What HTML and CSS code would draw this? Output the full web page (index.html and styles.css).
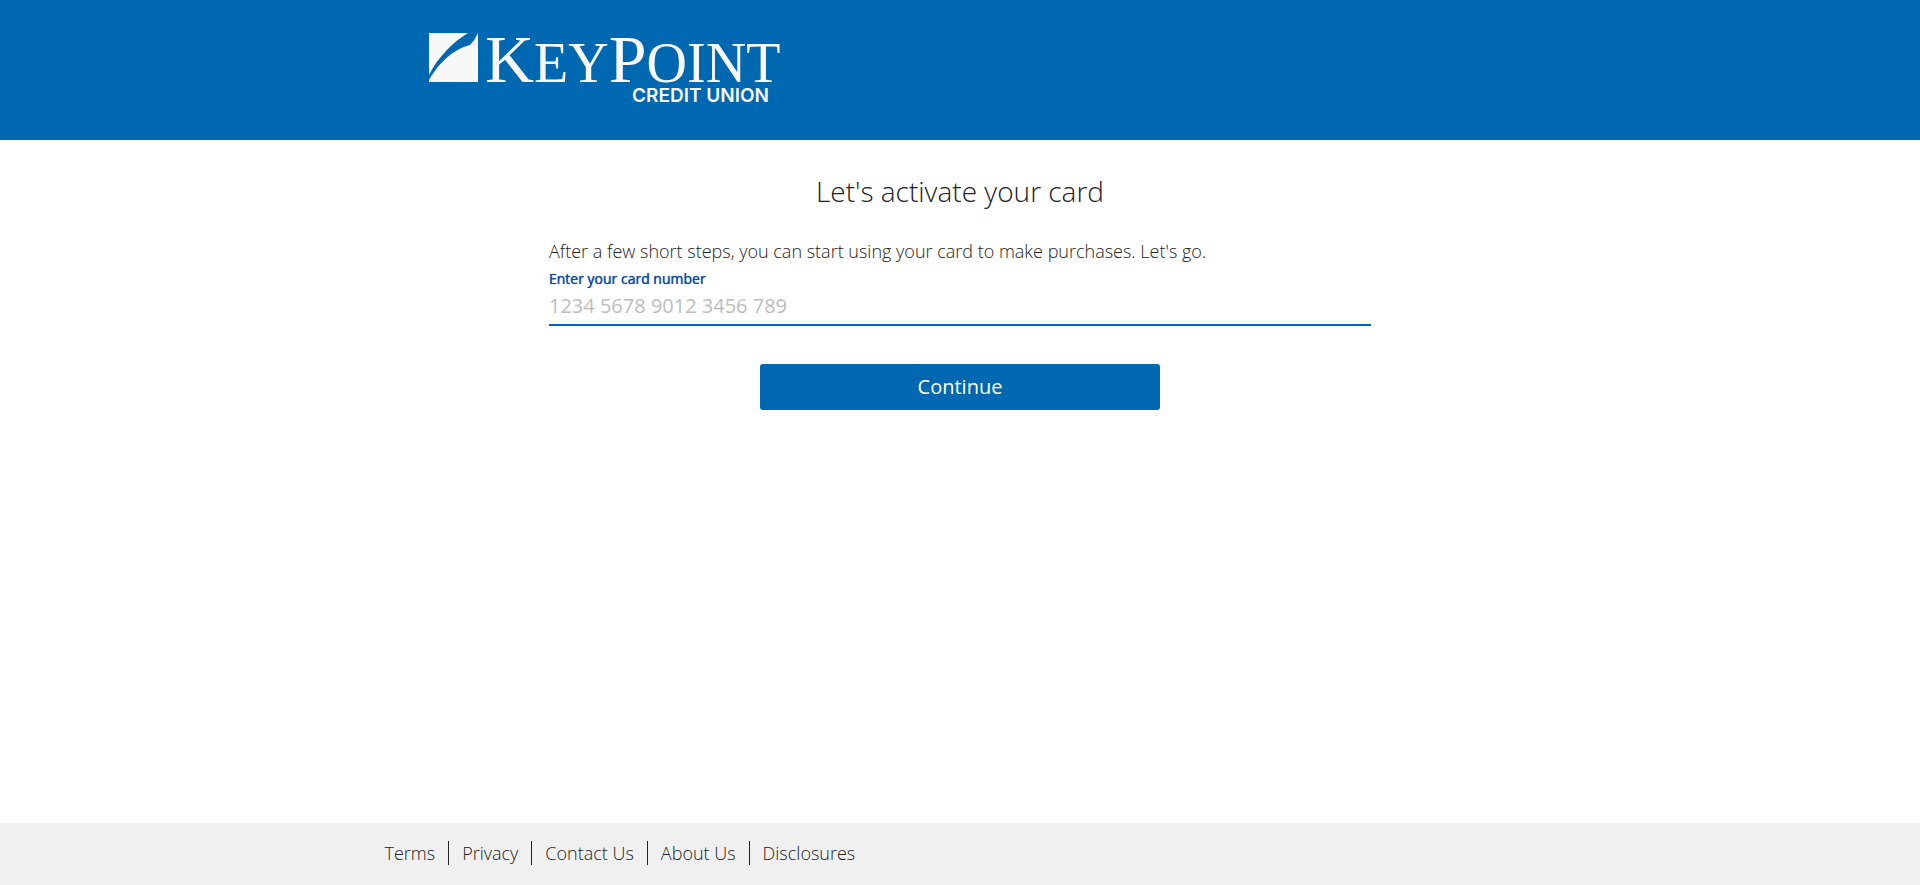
FILE: index.html
```html
<!DOCTYPE html>
<html lang="en">
<head>
<meta charset="utf-8">
<meta name="viewport" content="width=device-width, initial-scale=1">
<title>Activate your card</title>
<link rel="stylesheet" href="styles.css">
</head>
<body>
<header class="site-header">
  <div class="header-inner">
    <svg class="logo" width="352" height="76" viewBox="0 0 352 76" role="img" aria-label="KeyPoint Credit Union">
      <path d="M0 0H39C24 9 9 24 0 42ZM49 0V49H0V47C9 31 24 16 41 12Q46 7 49 0Z"/>
      <text class="logo-name" x="56" y="49"><tspan class="logo-cap">K</tspan>EY<tspan class="logo-cap">P</tspan>OINT</text>
      <text class="logo-sub" x="340" y="69" text-anchor="end">CREDIT UNION</text>
    </svg>
  </div>
</header>
<main class="content">
  <h1 class="title">Let's activate your card</h1>
  <form class="card-form">
    <p class="intro">After a few short steps, you can start using your card to make purchases. Let's go.</p>
    <label class="field-label" for="card-number">Enter your card number</label>
    <input class="field-input" id="card-number" type="text" inputmode="numeric" placeholder="1234 5678 9012 3456 789">
    <button class="continue" type="submit">Continue</button>
  </form>
</main>
<footer class="site-footer">
  <nav class="footer-nav">
    <a class="footer-link" href="#">Terms</a>
    <a class="footer-link" href="#">Privacy</a>
    <a class="footer-link" href="#">Contact Us</a>
    <a class="footer-link" href="#">About Us</a>
    <a class="footer-link" href="#">Disclosures</a>
  </nav>
</footer>
</body>
</html>
```
FILE: styles.css
```css
* {
  box-sizing: border-box;
}

body {
  display: flex;
  flex-direction: column;
  min-height: 100vh;
  margin: 0;
  background: #fff;
  color: #222;
  font-family: "Open Sans", sans-serif;
  font-size: 18px;
  font-weight: 300;
  line-height: 24px;
}

.site-header {
  background: #0067b1;
}

.header-inner {
  max-width: 1152px;
  margin: 0 auto;
  padding: 33px 45px 31px;
}

.logo {
  display: block;
  overflow: visible;
  fill: #f8f8f8;
}

.logo-name {
  font: 400 56px "Liberation Serif", serif;
}

.logo-cap {
  font-size: 68px;
}

.logo-sub {
  font: 600 19px Inter, sans-serif;
}

.content {
  flex: 1;
  width: 100%;
  max-width: 854px;
  margin: 0 auto;
  padding: 31px 16px;
}

.title {
  margin: 0 0 28px;
  font-size: 28px;
  font-weight: 300;
  line-height: 40px;
  text-align: center;
}

.card-form {
  display: flex;
  flex-direction: column;
}

.intro {
  margin: 0 0 6px;
}

.field-label {
  color: #0d47a1;
  font-size: 14px;
  font-weight: 400;
  line-height: 20px;
  text-shadow: 0 0 1px #0d47a1;
}

.field-input {
  width: 100%;
  height: 37px;
  padding: 0 0 2px;
  border: 0;
  border-bottom: 2px solid #0067b1;
  outline: 0;
  background: transparent;
  color: #222;
  font: 400 20px "Open Sans", sans-serif;
}

.field-input::placeholder {
  color: #bdbdbd;
  opacity: 1;
}

.continue {
  align-self: center;
  width: 100%;
  max-width: 400px;
  height: 46px;
  margin-top: 38px;
  padding: 0 0 2px;
  border: 0;
  border-radius: 3px;
  background: #0067b1;
  color: #fff;
  font: 400 20px "Open Sans", sans-serif;
}

.site-footer {
  background: #f0f0f0;
}

.footer-nav {
  display: flex;
  flex-wrap: wrap;
  max-width: 1151px;
  margin: 0 auto;
  padding: 18px 0 20px;
}

.footer-link {
  padding: 0 13px;
  border-left: 1px solid #222;
  color: #222;
  text-decoration: none;
}

.footer-link:first-child {
  padding-left: 0;
  border-left: 0;
}
```
